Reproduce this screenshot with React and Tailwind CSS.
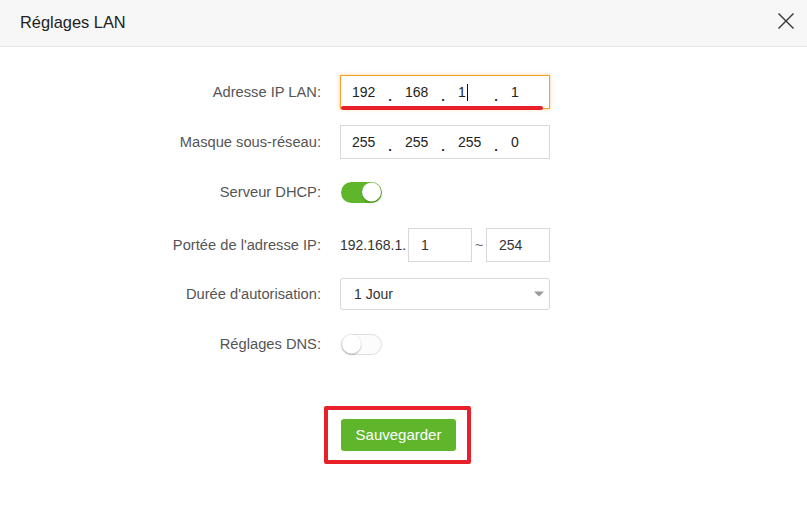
import React from "react";

const font = { fontFamily: '"Liberation Sans", Arial, sans-serif' };

function Label({ children }) {
  return (
    <div className="w-[321px] shrink-0 text-right text-[14.7px] text-[#555]">
      {children}
    </div>
  );
}

function IpBox({ parts, focused, caretAfter }) {
  return (
    <div
      className={
        "relative flex h-[34px] w-[210px] items-center bg-white pl-[11px] text-[14px] text-[#222] " +
        (focused
          ? "border border-[#f5a030] shadow-[0_0_4px_rgba(245,160,48,0.55)]"
          : "border border-[#d9d9d9]")
      }
    >
      {parts.map((p, i) => (
        <React.Fragment key={i}>
          <div className="flex w-[35px] items-center">
            <span>{p}</span>
            {caretAfter === i && <span className="ml-[1px] inline-block h-[17px] w-px bg-[#111]" />}
          </div>
          {i < parts.length - 1 && (
            <>
              <span className="w-[6px] pt-[8px] text-center text-[13px] font-bold leading-none">.</span>
              <span className="w-[12px]" />
            </>
          )}
        </React.Fragment>
      ))}
    </div>
  );
}

function Toggle({ on }) {
  return (
    <div
      className={
        "relative h-[21px] w-[41px] rounded-full " +
        (on ? "bg-[#60b62b]" : "border border-[#dedede] bg-[#fcfcfc]")
      }
    >
      <div
        className={
          "absolute top-1/2 h-[19px] w-[19px] -translate-y-1/2 rounded-full bg-white shadow-[0_1px_2px_rgba(0,0,0,0.3)] " +
          (on ? "right-[1px]" : "left-0")
        }
      />
    </div>
  );
}

export default function App() {
  return (
    <div className="h-[512px] w-[807px] bg-white" style={font}>
      <div className="flex h-[47px] items-start justify-between border-b border-[#e8e8e8] bg-[#f7f7f7] pl-[20px] pr-[12px] pt-[10px]">
        <div className="text-[16.4px] text-[#222]">Réglages LAN</div>
        <svg width="18" height="18" viewBox="0 0 18 18" className="mt-[2px]">
          <path d="M1.5 1.5 L16.5 16.5 M16.5 1.5 L1.5 16.5" stroke="#333" strokeWidth="1.4" />
        </svg>
      </div>

      <div className="flex flex-col pt-[28px]">
        <div className="flex h-[34px] items-center gap-[19px]">
          <Label>Adresse IP LAN:</Label>
          <div className="relative">
            <IpBox parts={["192", "168", "1", "1"]} focused caretAfter={2} />
            <div className="absolute left-[1px] top-[31px] h-[4px] w-[202px] rounded-full bg-[#e8202a]" />
          </div>
        </div>

        <div className="mt-[16px] flex h-[34px] items-center gap-[19px]">
          <Label>Masque sous-réseau:</Label>
          <IpBox parts={["255", "255", "255", "0"]} />
        </div>

        <div className="mt-[16px] flex h-[34px] items-center gap-[19px]">
          <Label>Serveur DHCP:</Label>
          <div className="pl-[1px]">
            <Toggle on />
          </div>
        </div>

        <div className="mt-[19px] flex h-[34px] items-center gap-[19px]">
          <Label>Portée de l'adresse IP:</Label>
          <div className="flex items-center text-[14px] text-[#333]">
            <span className="w-[68px]">192.168.1.</span>
            <div className="flex h-[34px] w-[64px] items-center border border-[#d9d9d9] pl-[12px]">1</div>
            <span className="w-[14px] text-center text-[#666]">~</span>
            <div className="flex h-[34px] w-[64px] items-center border border-[#d9d9d9] pl-[12px]">254</div>
          </div>
        </div>

        <div className="mt-[16px] flex h-[32px] items-center gap-[19px]">
          <Label>Durée d'autorisation:</Label>
          <div className="flex h-[32px] w-[210px] items-center justify-between rounded-[3px] border border-[#d9d9d9] pl-[13px] pr-[4px] text-[14px] text-[#333]">
            <span>1 Jour</span>
            <svg width="12" height="8" viewBox="0 0 12 8">
              <path d="M1 1.5 L11 1.5 L6 6.5 Z" fill="#999" />
            </svg>
          </div>
        </div>

        <div className="mt-[17px] flex h-[34px] items-center gap-[19px]">
          <Label>Réglages DNS:</Label>
          <div className="pl-[1px]">
            <Toggle />
          </div>
        </div>

        <div className="mt-[45px] flex justify-center pr-[12px]">
          <div className="rounded-[2px] border-[4px] border-[#e8202a] pb-[9px] pl-[13px] pr-[11px] pt-[9px]">
            <button className="h-[32px] w-[115px] rounded-[3px] bg-[#60b62b] text-[15px] text-white">
              Sauvegarder
            </button>
          </div>
        </div>
      </div>
    </div>
  );
}
